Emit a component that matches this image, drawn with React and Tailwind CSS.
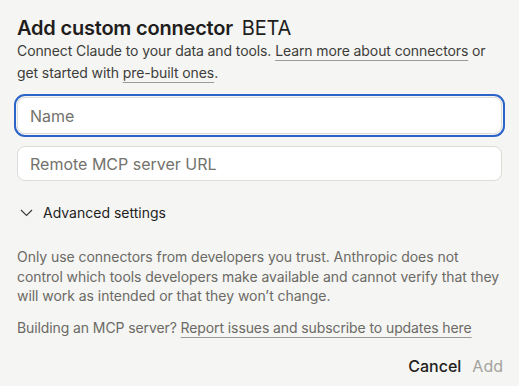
export default function App() {
  return (
    <div className="w-[519px] h-[386px] bg-[#f5f5f3] px-[17px] pt-[14px] text-[#1f1e1d] overflow-hidden" style={{ fontFamily: 'Inter, "Noto Sans", sans-serif' }}>
      <h1 className="text-[20px] leading-[28px] font-semibold tracking-[-0.2px]">
        Add custom connector <span className="font-normal ml-[4px]">BETA</span>
      </h1>
      <p className="text-[14px] leading-[22px] text-[#3d3d3a] -mt-[2px] tracking-[-0.1px]">
        Connect Claude to your data and tools.{" "}
        <a className="underline decoration-[#9a9a96] underline-offset-[4px]">Learn more about connectors</a> or get started with{" "}
        <a className="underline decoration-[#9a9a96] underline-offset-[4px]">pre-built ones</a>.
      </p>
      <div className="mt-[10px] -mx-[3px] rounded-[11px] border-2 border-[#2c63c9] p-px">
        <input
          className="w-full h-[37px] rounded-[8px] border border-[#dcdcd8] bg-white px-[12px] text-[16px] outline-none placeholder:text-[#73726c]"
          placeholder="Name"
        />
      </div>
      <input
        className="mt-[9px] w-full h-[35px] rounded-[8px] border border-[#dcdcd8] bg-white px-[12px] text-[16px] outline-none placeholder:text-[#73726c]"
        placeholder="Remote MCP server URL"
      />
      <div className="mt-[21px] flex items-center gap-[10px] text-[14px] text-[#1f1e1d] pl-[3px]">
        <svg width="13" height="8" viewBox="0 0 13 8" fill="none" stroke="#3d3d3a" strokeWidth="1.2">
          <path d="M1 1l5.5 5.5L12 1" />
        </svg>
        <span>Advanced settings</span>
      </div>
      <p className="mt-[24px] text-[14px] leading-[19.5px] text-[#6b6a65] tracking-[-0.05px] -mr-[2px]">
        Only use connectors from developers you trust. Anthropic does not control which tools developers make available and cannot verify that they will work as intended or that they won’t change.
      </p>
      <p className="mt-[12px] text-[14px] leading-[20px] text-[#6b6a65] tracking-[-0.1px]">
        Building an MCP server?{" "}
        <a className="underline decoration-[#9a9a96] underline-offset-[4px]">Report issues and subscribe to updates here</a>
      </p>
      <div className="mt-[16px] flex justify-end items-center gap-[11px] text-[16px] -mr-[1px]">
        <span className="font-medium text-[#1f1e1d]">Cancel</span>
        <span className="text-[#a3a29d]">Add</span>
      </div>
    </div>
  );
}
